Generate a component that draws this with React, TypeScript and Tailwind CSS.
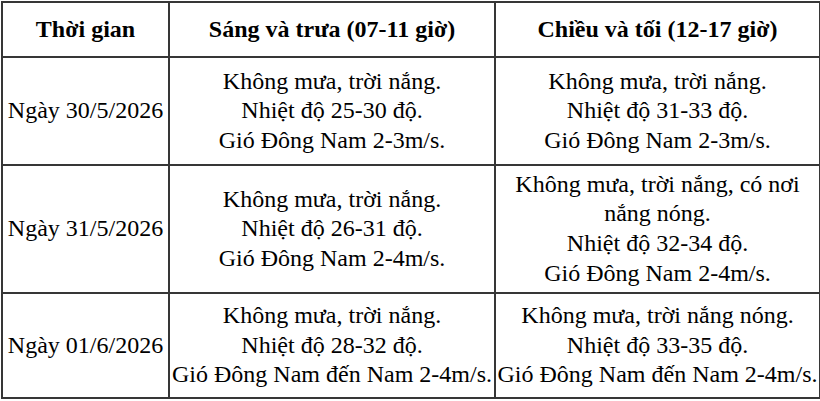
import React from 'react';

interface Row {
  date: string;
  morning: string[];
  afternoon: string[];
  height: string;
}

const rows: Row[] = [
  {
    date: 'Ngày 30/5/2026',
    morning: ['Không mưa, trời nắng.', 'Nhiệt độ 25-30 độ.', 'Gió Đông Nam 2-3m/s.'],
    afternoon: ['Không mưa, trời nắng.', 'Nhiệt độ 31-33 độ.', 'Gió Đông Nam 2-3m/s.'],
    height: 'h-[108px]',
  },
  {
    date: 'Ngày 31/5/2026',
    morning: ['Không mưa, trời nắng.', 'Nhiệt độ 26-31 độ.', 'Gió Đông Nam 2-4m/s.'],
    afternoon: ['Không mưa, trời nắng, có nơi', 'nắng nóng.', 'Nhiệt độ 32-34 độ.', 'Gió Đông Nam 2-4m/s.'],
    height: 'h-[128px]',
  },
  {
    date: 'Ngày 01/6/2026',
    morning: ['Không mưa, trời nắng.', 'Nhiệt độ 28-32 độ.', 'Gió Đông Nam đến Nam 2-4m/s.'],
    afternoon: ['Không mưa, trời nắng nóng.', 'Nhiệt độ 33-35 độ.', 'Gió Đông Nam đến Nam 2-4m/s.'],
    height: 'h-[105px]',
  },
];

const cell = 'border-2 border-[#363636] text-center align-middle p-0';

function Lines({ lines }: { lines: string[] }) {
  return (
    <>
      {lines.map((l, i) => (
        <div key={i} className="whitespace-nowrap">
          {l}
        </div>
      ))}
    </>
  );
}

export default function App() {
  return (
    <div className="w-[820px] h-[401px] bg-white pl-[1px] pt-[1px] font-['Liberation_Serif','Times_New_Roman',serif] text-[24px] leading-[29.6px] text-black">
      <table className="border-collapse table-fixed w-[818px]">
        <colgroup>
          <col className="w-[167px]" />
          <col className="w-[326px]" />
          <col className="w-[325px]" />
        </colgroup>
        <thead>
          <tr className="h-[55px]">
            <th className={`${cell} font-bold`}>Thời gian</th>
            <th className={`${cell} font-bold`}>Sáng và trưa (07-11 giờ)</th>
            <th className={`${cell} font-bold`}>Chiều và tối (12-17 giờ)</th>
          </tr>
        </thead>
        <tbody>
          {rows.map((r) => (
            <tr key={r.date} className={r.height}>
              <td className={cell}>{r.date}</td>
              <td className={cell}>
                <Lines lines={r.morning} />
              </td>
              <td className={cell}>
                <Lines lines={r.afternoon} />
              </td>
            </tr>
          ))}
        </tbody>
      </table>
    </div>
  );
}
